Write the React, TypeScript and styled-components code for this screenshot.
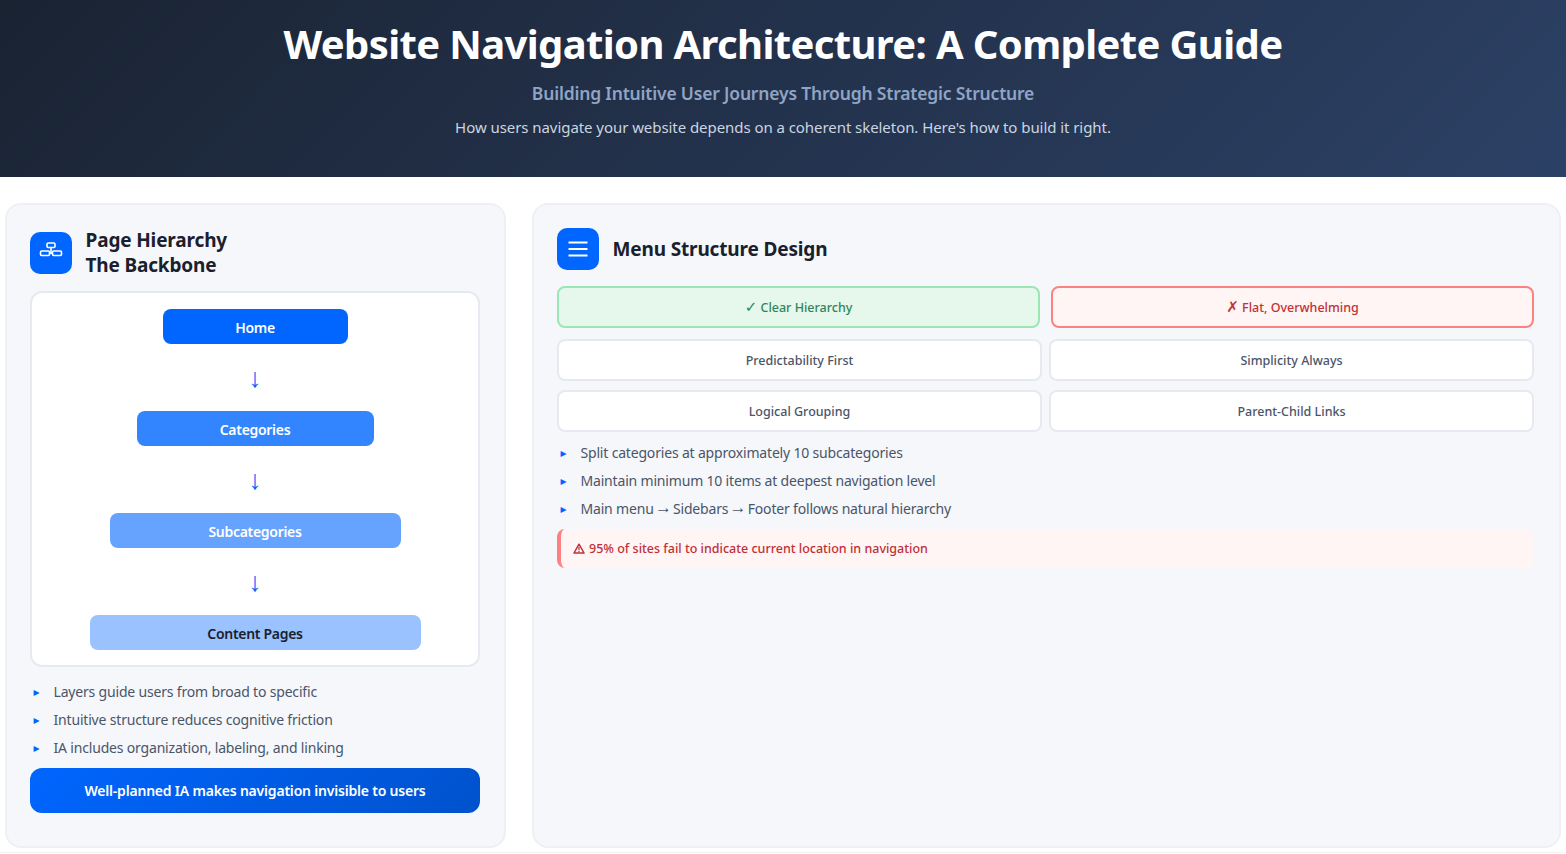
import { FC } from "react";
import styled, { createGlobalStyle } from "styled-components";

const GlobalStyle = createGlobalStyle`
  html, body {
    margin: 0;
    padding: 0;
    background: #fff;
    font-family: "Noto Sans", "Liberation Sans", "DejaVu Sans", sans-serif;
  }
`;

const hierarchy = [
    { label: "Home", width: 185, bg: "#0066ff", color: "#fff" },
    { label: "Categories", width: 237, bg: "#3385ff", color: "#fff" },
    { label: "Subcategories", width: 291, bg: "#66a3ff", color: "#fff" },
    { label: "Content Pages", width: 331, bg: "#99c2ff", color: "#1a202c" },
];

const HierarchyIcon: FC = () => (
    <svg width="24" height="24" viewBox="0 0 24 24" fill="none" stroke="#fff" strokeWidth="1.6" strokeLinejoin="round">
        <rect x="8" y="2" width="8" height="4.5" rx="1.2" />
        <rect x="1.5" y="10" width="9" height="4.5" rx="1.2" />
        <rect x="13.5" y="10" width="9" height="4.5" rx="1.2" />
        <path d="M12 6.5v5.7M10.5 12.25h3" />
    </svg>
);

const MenuIcon: FC = () => (
    <svg width="24" height="24" viewBox="0 0 24 24" fill="none" stroke="#fff" strokeWidth="2">
        <path d="M2.5 5.5h19M2.5 12h19M2.5 18.5h19" />
    </svg>
);

const WarningIcon: FC = () => (
    <SWarningGlyph width="12" height="11" viewBox="0 0 12 11" fill="none" stroke="currentColor">
        <path d="M6 1.2 11 10H1z" strokeWidth="1.5" strokeLinejoin="round" />
        <path d="M6 4v3.2M6 8v1" strokeWidth="1.2" />
    </SWarningGlyph>
);

export default function App() {
    return (
        <>
            <GlobalStyle />
            <SHeader>
                <STitle>Website Navigation Architecture: A Complete Guide</STitle>
                <SSubtitle>Building Intuitive User Journeys Through Strategic Structure</SSubtitle>
                <SIntro>How users navigate your website depends on a coherent skeleton. Here's how to build it right.</SIntro>
            </SHeader>
            <SMain>
                <SPanel $right={24}>
                    <SPanelHead $tall>
                        <SIconBox><HierarchyIcon /></SIconBox>
                        <SPanelTitle>Page Hierarchy<br />The Backbone</SPanelTitle>
                    </SPanelHead>
                    <SDiagram>
                        {hierarchy.map((node, i) => (
                            <SDiagramStep key={node.label}>
                                {i > 0 && <SArrow>↓</SArrow>}
                                <SNode $width={node.width} $bg={node.bg} $color={node.color}>{node.label}</SNode>
                            </SDiagramStep>
                        ))}
                    </SDiagram>
                    <SList $top={11}>
                        <SItem>Layers guide users from broad to specific</SItem>
                        <SItem>Intuitive structure reduces cognitive friction</SItem>
                        <SItem>IA includes organization, labeling, and linking</SItem>
                    </SList>
                    <SCallout>Well-planned IA makes navigation invisible to users</SCallout>
                </SPanel>
                <SPanel $right={25}>
                    <SPanelHead>
                        <SIconBox><MenuIcon /></SIconBox>
                        <SPanelTitle>Menu Structure Design</SPanelTitle>
                    </SPanelHead>
                    <SCompare>
                        <SCard $tone="good"><SMark>✓</SMark> Clear Hierarchy</SCard>
                        <SCard $tone="bad"><SMark>✗</SMark> Flat, Overwhelming</SCard>
                    </SCompare>
                    <SCardGrid>
                        <SCard>Predictability First</SCard>
                        <SCard>Simplicity Always</SCard>
                        <SCard>Logical Grouping</SCard>
                        <SCard>Parent-Child Links</SCard>
                    </SCardGrid>
                    <SList $top={7}>
                        <SItem>Split categories at approximately 10 subcategories</SItem>
                        <SItem>Maintain minimum 10 items at deepest navigation level</SItem>
                        <SItem>Main menu <SInlineArrow>→</SInlineArrow> Sidebars <SInlineArrow>→</SInlineArrow> Footer follows natural hierarchy</SItem>
                    </SList>
                    <SWarning><WarningIcon />95% of sites fail to indicate current location in navigation</SWarning>
                </SPanel>
            </SMain>
        </>
    );
}

const SHeader = styled.header`
  height: 177px;
  box-sizing: border-box;
  padding-top: 18px;
  text-align: center;
  background: linear-gradient(135deg, #1a2332 0%, #2c4166 100%);
`;

const STitle = styled.h1`
  margin: 0;
  font-size: 40px;
  line-height: 52px;
  font-weight: 700;
  letter-spacing: -0.63px;
  color: #fff;
`;

const SSubtitle = styled.p`
  margin: 9px 0 0;
  font-size: 17.5px;
  line-height: 28px;
  font-weight: 600;
  letter-spacing: -0.18px;
  color: #90a4c4;
`;

const SIntro = styled.p`
  margin: 9px 0 0;
  font-size: 15px;
  line-height: 22px;
  letter-spacing: -0.06px;
  color: #cbd5e0;
`;

const SMain = styled.main`
  box-sizing: border-box;
  display: grid;
  grid-template-columns: 501px 1029px;
  gap: 26px;
  height: 676px;
  padding: 26px 5px 0;
  border-bottom: 1px solid #f0f2f5;
`;

const SPanel = styled.section<{ $right: number }>`
  box-sizing: border-box;
  height: 645px;
  padding: 23px ${ (p) => p.$right }px 0 23px;
  background: #f5f7fb;
  border: 2px solid #edf0f5;
  border-radius: 16px;
`;

const SPanelHead = styled.div<{ $tall?: boolean }>`
  display: flex;
  align-items: center;
  gap: 13.5px;
  margin-bottom: ${ (p) => (p.$tall ? "13px" : "16px") };
`;

const SIconBox = styled.div`
  display: flex;
  align-items: center;
  justify-content: center;
  flex: none;
  width: 42px;
  height: 42px;
  border-radius: 10px;
  background: #0066ff;
`;

const SPanelTitle = styled.h2`
  margin: 0;
  font-size: 19px;
  line-height: 25px;
  font-weight: 700;
  letter-spacing: -0.15px;
  color: #1a202c;
`;

const SDiagram = styled.div`
  box-sizing: border-box;
  height: 376px;
  padding-top: 16px;
  background: #fff;
  border: 2px solid #e6eaf0;
  border-radius: 12px;
`;

const SDiagramStep = styled.div`
  display: flex;
  flex-direction: column;
  align-items: center;
`;

const SArrow = styled.div`
  height: 67px;
  font-family: "Liberation Sans", sans-serif;
  font-size: 27px;
  line-height: 68px;
  color: #0066ff;
`;

const SNode = styled.div<{ $width: number; $bg: string; $color: string }>`
  width: ${ (p) => p.$width }px;
  height: 35px;
  border-radius: 8px;
  font-size: 14px;
  line-height: 37px;
  font-weight: 600;
  letter-spacing: -0.3px;
  text-align: center;
  background: ${ (p) => p.$bg };
  color: ${ (p) => p.$color };
`;

const SList = styled.ul<{ $top: number }>`
  margin: ${ (p) => p.$top }px 0 0;
  padding: 0;
  list-style: none;
`;

const SItem = styled.li`
  position: relative;
  height: 28px;
  padding-left: 23.5px;
  font-size: 14px;
  line-height: 28px;
  letter-spacing: -0.18px;
  color: #4a5568;

  &::before {
    content: "▸";
    position: absolute;
    left: 3.5px;
    top: 0;
    font-size: 12px;
    color: #0066ff;
  }
`;

const SInlineArrow = styled.span`
  margin: 0 -2.2px;
  font-family: "Liberation Sans", sans-serif;
  font-size: 17px;
  line-height: 1;
  vertical-align: 1px;
`;

const SCallout = styled.div`
  height: 45px;
  margin-top: 6px;
  border-radius: 12px;
  font-size: 14px;
  line-height: 45px;
  font-weight: 600;
  letter-spacing: -0.2px;
  text-align: center;
  color: #fff;
  background: linear-gradient(135deg, #0066ff 0%, #0052cc 100%);
`;

const SCompare = styled.div`
  display: grid;
  grid-template-columns: 1fr 1fr;
  gap: 11px;
  margin-bottom: 11px;
`;

const SCardGrid = styled.div`
  display: grid;
  grid-template-columns: 1fr 1fr;
  gap: 9px 7px;
`;

const cardTones = {
    good: { bg: "#e6f7ec", border: "#9ae6b4", color: "#2f855a" },
    bad: { bg: "#fff5f5", border: "#fc8181", color: "#c53030" },
    plain: { bg: "#fff", border: "#e6eaf0", color: "#4a5568" },
};

const SCard = styled.div<{ $tone?: "good" | "bad" }>`
  box-sizing: border-box;
  height: 42px;
  border-radius: 8px;
  border: 2px solid ${ (p) => cardTones[p.$tone ?? "plain"].border };
  background: ${ (p) => cardTones[p.$tone ?? "plain"].bg };
  color: ${ (p) => cardTones[p.$tone ?? "plain"].color };
  font-size: 12.5px;
  line-height: 40px;
  font-weight: 500;
  text-align: center;
`;

const SMark = styled.span`
  font-family: "DejaVu Sans", sans-serif;
  font-size: 15px;
  font-weight: 700;
  line-height: 1;
`;

const SWarningGlyph = styled.svg`
  margin-right: 4px;
  vertical-align: -1px;
`;

const SWarning = styled.div`
  box-sizing: border-box;
  height: 39px;
  margin-top: 6px;
  padding-left: 12px;
  border-left: 4px solid #fc8181;
  border-radius: 8px;
  background: #fff5f5;
  color: #bf3036;
  font-size: 12.5px;
  line-height: 39px;
  font-weight: 500;
`;
